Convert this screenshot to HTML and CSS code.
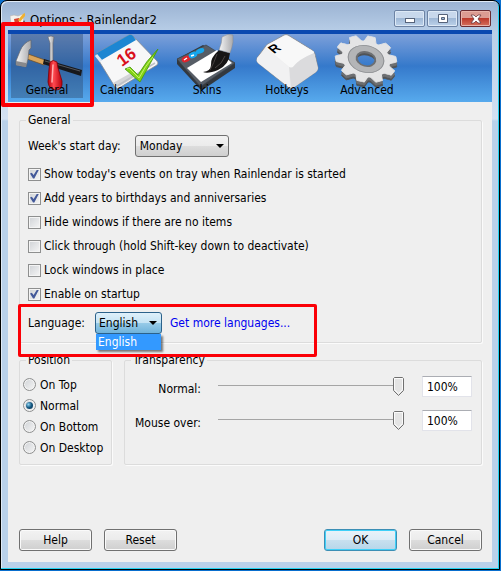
FILE: index.html
```
<!DOCTYPE html>
<html lang="en">

<head>
    <meta charset="UTF-8">
    <meta name="viewport" content="width=device-width, initial-scale=1.0">
    <title>Options : Rainlendar2</title>
    <link rel="stylesheet" href="styles.css">
</head>

<body>
    <div class="window">
        <header class="titlebar">
            <svg class="app-icon" viewBox="0 0 16 14" aria-hidden="true">
                <path d="M0 3l4-1 4 1 5-2 1 9-6 3-4-2-3 1z" fill="#f4f2ee" stroke="#b9b4ae" stroke-width=".6" />
                <path d="M4 6l5-1v5l-4 1z" fill="#d9452f" />
                <path d="M8 7l5-6 2-1v3l-5 6z" fill="#f0b132" />
                <path d="M14 7l1 2-1 3-2-1z" fill="#555" />
            </svg>
            <h1>Options : Rainlendar2</h1>
            <div class="window-buttons">
                <button class="window-button" aria-label="Minimize">
                    <svg viewBox="0 0 12 10"><rect x="1.5" y="4.5" width="9" height="4" fill="#fff" stroke="#56637a" /></svg>
                </button>
                <button class="window-button" aria-label="Maximize">
                    <svg viewBox="0 0 12 10"><path d="M1.5.5h9v8h-9zM4.500 3.500v2h3v-2z" fill="#fff" fill-rule="evenodd" stroke="#56637a" /></svg>
                </button>
                <button class="window-button close" aria-label="Close">
                    <svg viewBox="0 0 12 10"><path d="M1 1h3l2 2 2-2h3L8 5l3 4H8L6 7 4 9H1l3-4z" fill="#fff" stroke="#6b3a40" stroke-width=".8" /></svg>
                </button>
            </div>
        </header>

        <main class="client">
            <nav class="toolbar">
                <button class="tool selected">
                    <svg viewBox="0 0 72 58" aria-hidden="true">
                        <defs>
                            <linearGradient id="steel" x1="0" x2="1">
                                <stop offset="0" stop-color="#f6f6f6" />
                                <stop offset="1" stop-color="#a9a9ac" />
                            </linearGradient>
                            <linearGradient id="red" x1="0" x2="1">
                                <stop offset="0" stop-color="#b5000c" />
                                <stop offset=".4" stop-color="#ff4a50" />
                                <stop offset="1" stop-color="#b8000c" />
                            </linearGradient>
                        </defs>
                        <path d="M17 20l17 6-1 5-17-6z" fill="#d9a55c" stroke="#6d4a20" stroke-width=".7" />
                        <path d="M33 25l38 11-1 6-38-12z" fill="#17181b" />
                        <path d="M34 27l35 10" stroke="#55585e" />
                        <path d="M20 6q-8 3-11 11l-4 10v4l10 2 2-8 1-9 2-2z" fill="url(#steel)" stroke="#66676b" stroke-width=".7" />
                        <path d="M5 27l10 2v4L5 31z" fill="#88898d" />
                        <path d="M37 3q3-2 6 0l-1 6v20h-3V9z" fill="url(#steel)" stroke="#66676b" stroke-width=".6" />
                        <path d="M39 28q3-3 7 0l1 6 4 13q1 9-6 9t-8-8l1-13z" fill="url(#red)" stroke="#7d0008" stroke-width=".8" />
                        <path d="M42 31l-1 17" stroke="#ffb0b0" stroke-width="1.500" stroke-linecap="round" />
                    </svg>
                    <span>General</span>
                </button>
                <button class="tool">
                    <svg viewBox="0 0 72 58" aria-hidden="true">
                        <path d="M5 22q-1-2 1-3L38 1q2-1 4 1l24 25q2 2 0 4L28 54q-2 1-4-1z" fill="#f7f7f8" stroke="#85898f" stroke-width=".8" />
                        <path d="M5 22q-1-2 1-3L38 1q2-1 4 1l3 4L9 27z" fill="#1d86d2" />
                        <path d="M5 21l5 6" stroke="#dbe7f4" stroke-width="3" />
                        <path d="M22 49l16-9 9 1-18 11q-2 1-4 0z" fill="#d4d5d8" />
                        <path d="M26 52L64 29" stroke="#bfc1c6" stroke-width="1.500" />
                        <text class="date" transform="translate(31 33) rotate(-36)">16</text>
                        <path d="M34 35l5-2 8 8q8-14 20-26-9 17-18 33z" fill="#83d216" stroke="#43970c" stroke-width=".8" />
                        <path d="M36 35l2-1 10 10q6-12 14-21" fill="none" stroke="#c5f36b" />
                    </svg>
                    <span>Calendars</span>
                </button>
                <button class="tool">
                    <svg viewBox="0 0 72 58" aria-hidden="true">
                        <path d="M6 30l0-5 26-14 32 18v5L33 55q-2 1-4 0z" fill="#33383e" />
                        <path d="M6 25l29-14 29 18-32 22q-2 1-4 0z" fill="#565d66" stroke="#3b4148" stroke-width=".7" />
                        <path d="M16 34l30-18 15 13-31 19z" fill="#fff" />
                        <ellipse cx="15" cy="25" rx="4.500" ry="3" fill="#df242d" transform="rotate(-24 15 25)" />
                        <ellipse cx="22" cy="21" rx="4.500" ry="3" fill="#16a6ec" transform="rotate(-24 22 21)" />
                        <ellipse cx="29" cy="17" rx="4.500" ry="2.500" fill="#16a6ec" transform="rotate(-24 29 17)" />
                        <path d="M13 26l3-2M20 22l3-1" stroke="#fff" stroke-width="1.500" />
                        <path d="M48 16l11 3q-1 12-12 17-10 4-15 2 8-1 8-7-1-7 8-15z" fill="#171515" />
                        <path d="M46 20q-3 9-7 16M54 22q-3 8-10 12" stroke="#494342" fill="none" />
                        <path d="M51 3q6-4 11-2v7q-1 6-3 11l-11-3q3-7 3-13z" fill="url(#steel)" stroke="#87898d" stroke-width=".5" />
                    </svg>
                    <span>Skins</span>
                </button>
                <button class="tool">
                    <svg viewBox="0 0 72 58" aria-hidden="true">
                        <path d="M33 1q2-1 4 0l24 15q2 1 3 4l3 14q0 2-2 4L42 54q-2 1-4 0L7 29q-2-2-1-5l8-11q1-2 3-3z" fill="#ececed" stroke="#85888c" stroke-width=".8" />
                        <path d="M16 11L33 2q2-1 4 0l25 15q2 1 0 3-14 5-20 13-2 1-4 0L15 14z" fill="#f8f8f8" />
                        <path d="M38 33q2 1 4 0 6-8 21-14l4 15q0 2-2 4L42 54h-2z" fill="#dbdbdd" />
                        <path d="M15 14l23 19 1 21L7 29q-2-2-1-5z" fill="#f1f1f2" />
                        <text class="keycap" transform="translate(23 20) rotate(-32) skewX(18)">R</text>
                    </svg>
                    <span>Hotkeys</span>
                </button>
                <button class="tool">
                    <svg viewBox="0 0 72 58" aria-hidden="true">
                        <defs>
                            <path id="tooth" d="M-7-20l3-10q0-1 1-1h6q1 0 1 1l3 10z" />
                            <g id="teeth">
                                <use href="#tooth" />
                                <use href="#tooth" transform="rotate(36)" />
                                <use href="#tooth" transform="rotate(72)" />
                                <use href="#tooth" transform="rotate(108)" />
                                <use href="#tooth" transform="rotate(144)" />
                                <use href="#tooth" transform="rotate(180)" />
                                <use href="#tooth" transform="rotate(216)" />
                                <use href="#tooth" transform="rotate(252)" />
                                <use href="#tooth" transform="rotate(288)" />
                                <use href="#tooth" transform="rotate(324)" />
                                <circle r="18" fill="none" stroke-width="13" />
                            </g>
                        </defs>
                        <g transform="translate(35 30) rotate(14) scale(1 .74)" fill="#505356" stroke="#505356"><use href="#teeth" /></g>
                        <g transform="translate(35 28) rotate(14) scale(1 .74)" fill="#6d6f72" stroke="#6d6f72"><use href="#teeth" /></g>
                        <g transform="translate(35 25) rotate(14) scale(1 .74)" fill="#e4e4e5" stroke="#e4e4e5">
                            <use href="#teeth" />
                            <circle r="14" fill="none" stroke="#b4b5b7" stroke-width="9" />
                            <circle r="18" fill="none" stroke="#8e9093" />
                            <circle r="9.500" fill="none" stroke="#6d6f72" stroke-width="2" />
                        </g>
                    </svg>
                    <span>Advanced</span>
                </button>
            </nav>

            <form class="options">
                <fieldset class="general">
                    <legend>General</legend>
                    <div class="field week">
                        <label for="week-start">Week's start day:</label>
                        <select id="week-start">
                            <option>Monday</option>
                            <option>Sunday</option>
                        </select>
                    </div>
                    <label class="check"><input type="checkbox" checked>Show today's events on tray when Rainlendar is started</label>
                    <label class="check"><input type="checkbox" checked>Add years to birthdays and anniversaries</label>
                    <label class="check"><input type="checkbox">Hide windows if there are no items</label>
                    <label class="check"><input type="checkbox">Click through (hold Shift-key down to deactivate)</label>
                    <label class="check"><input type="checkbox">Lock windows in place</label>
                    <label class="check"><input type="checkbox" checked>Enable on startup</label>
                    <div class="field language">
                        <label for="language">Language:</label>
                        <div class="dropdown">
                            <select id="language" class="open">
                                <option>English</option>
                            </select>
                            <div class="dropdown-list">English</div>
                        </div>
                        <a href="#">Get more languages...</a>
                    </div>
                </fieldset>

                <div class="groups">
                    <fieldset class="position">
                        <legend>Position</legend>
                        <label class="radio"><input type="radio" name="position">On Top</label>
                        <label class="radio"><input type="radio" name="position" checked>Normal</label>
                        <label class="radio"><input type="radio" name="position">On Bottom</label>
                        <label class="radio"><input type="radio" name="position">On Desktop</label>
                    </fieldset>
                    <fieldset class="transparency">
                        <legend>Transparency</legend>
                        <div class="slider-row">
                            <label for="normal">Normal:</label>
                            <input type="range" id="normal" min="0" max="100" value="100">
                            <input type="text" class="percent" value="100%" aria-label="Normal value">
                        </div>
                        <div class="slider-row">
                            <label for="mouse-over">Mouse over:</label>
                            <input type="range" id="mouse-over" min="0" max="100" value="100">
                            <input type="text" class="percent" value="100%" aria-label="Mouse over value">
                        </div>
                    </fieldset>
                </div>

                <footer class="actions">
                    <button type="button">Help</button>
                    <button type="button">Reset</button>
                    <button type="submit" class="default">OK</button>
                    <button type="button">Cancel</button>
                </footer>
            </form>
        </main>

        <div class="highlight highlight-tool"></div>
        <div class="highlight highlight-language"></div>
    </div>
</body>

</html>
```

FILE: styles.css
```
* {
    box-sizing: border-box;
}

body {
    display: flex;
    min-height: 100vh;
    margin: 0;
    padding: 0 1px 1px 0;
    background: #0a6fce;
    color: #000;
    font-family: Tahoma, "DejaVu Sans Condensed", "DejaVu Sans", sans-serif;
    font-size: 12px;
    line-height: 16px;
}

button,
input,
select {
    font: inherit;
    color: inherit;
}

h1 {
    flex: 1;
    margin: 0;
    font-size: 13px;
    font-weight: normal;
}

.window {
    position: relative;
    display: flex;
    flex: 1;
    flex-direction: column;
    padding: 0 7px 7px 6px;
    border: 1px solid #000;
    border-radius: 7px 7px 0 0;
    background: linear-gradient(#9ab2d2, #b9cfe8 32px, #d3e1f2 118px, #b9d1ea 120px);
    box-shadow: inset -1px -1px #22d3f2, inset 1px 1px #dfeaf6;
}

/* Title bar */

.titlebar {
    display: flex;
    align-items: center;
    gap: 4px;
    height: 29px;
    padding: 8px 1px 0 3px;
}

.app-icon {
    width: 16px;
    height: 14px;
}

.window-buttons {
    display: flex;
    align-self: flex-start;
    gap: 2px;
    padding-top: 1px;
}

.window-button {
    display: flex;
    align-items: center;
    justify-content: center;
    width: 31px;
    height: 17px;
    padding: 0;
    border: 1px solid #6d83a4;
    border-radius: 2px;
    background: linear-gradient(#c8d8ec 50%, #9fb8d6 50%, #bcd2ea);
    box-shadow: inset 0 0 0 1px #dde9f6;
}

.window-button svg {
    width: 12px;
    height: 10px;
}

.window-button.close {
    border-color: #6a2c31;
    background: linear-gradient(#dc9c92 50%, #bd3b2c 50%, #d5705c);
    box-shadow: inset 0 0 0 1px #e8b3a9;
}

/* Toolbar */

.client {
    display: flex;
    flex: 1;
    flex-direction: column;
    margin-left: 1px;
    background: #efefef;
}

.toolbar {
    display: flex;
    gap: 8px;
    padding: 4px 3px;
    background: linear-gradient(#0a48b0 4px, #7da0da 4px, #3579cb 36px, #57aaed);
}

.tool {
    display: flex;
    flex-direction: column;
    width: 72px;
    padding: 0;
    border: 0;
    background: none;
    text-align: center;
}

.tool svg {
    width: 72px;
    height: 58px;
    margin-bottom: -9px;
}

.tool span {
    line-height: 15px;
}

.tool.selected {
    background: rgba(45, 70, 105, 0.4);
}

.date {
    fill: #d90f1b;
    font-family: "Liberation Sans", Arial, sans-serif;
    font-size: 17px;
    font-weight: bold;
}

.keycap {
    font-family: "Liberation Sans", Arial, sans-serif;
    font-size: 13px;
    font-weight: bold;
}

/* Option groups */

.options {
    display: flex;
    flex: 1;
    flex-direction: column;
    padding: 10px 10px 11px 11px;
}

fieldset {
    display: flex;
    flex-direction: column;
    min-width: 0;
    margin: 0;
    padding: 0 8px;
    border: 1px solid #dcdcdc;
    border-radius: 2px;
    box-shadow: 1px 1px #fbfbfb;
}

legend {
    margin-left: -2px;
    padding: 0 2px;
}

.field {
    display: flex;
    align-items: center;
}

.week {
    gap: 14px;
    padding: 7px 0 5px;
}

.language {
    gap: 8px;
    padding: 6px 0 8px;
}

.language label {
    width: 59px;
}

.check,
.radio {
    display: flex;
    align-items: center;
    gap: 3px;
    height: 24px;
}

.check input,
.radio input {
    display: grid;
    place-content: center;
    appearance: none;
    width: 13px;
    height: 13px;
    margin: 0;
    border: 1px solid #8e8f8f;
    background: linear-gradient(135deg, #cfd2d6, #f6f6f6);
    box-shadow: inset 0 0 0 1px #f4f4f4;
}

.check input:checked::after {
    content: "";
    width: 9px;
    height: 9px;
    background: #43599a;
    clip-path: polygon(0 45%, 20% 35%, 40% 62%, 78% 0, 100% 0, 48% 100%, 34% 100%);
}

.radio {
    gap: 4px;
    height: 21px;
}

.radio input {
    border-radius: 50%;
}

.radio input:checked::after {
    content: "";
    width: 7px;
    height: 7px;
    border-radius: 50%;
    background: radial-gradient(circle at 35% 35%, #8fd4f2, #14567f 50%, #0b2f4d);
}

select {
    appearance: none;
    display: block;
    width: 94px;
    height: 22px;
    padding: 0 16px 0 4px;
    border: 1px solid #707070;
    border-radius: 3px;
    background:
        url("data:image/svg+xml,%3Csvg xmlns='http://www.w3.org/2000/svg' width='8' height='4'%3E%3Cpath d='M0 0h8L4 4z'/%3E%3C/svg%3E") no-repeat right 4px center,
        linear-gradient(#f2f2f2, #ebebeb 50%, #dddddd 50%, #cfcfcf);
}

select.open {
    width: 67px;
    padding-left: 3px;
    border-color: #2c628b;
    background:
        url("data:image/svg+xml,%3Csvg xmlns='http://www.w3.org/2000/svg' width='8' height='4'%3E%3Cpath d='M0 0h8L4 4z'/%3E%3C/svg%3E") no-repeat right 4px center,
        linear-gradient(#dff0fa, #c4e3f4 50%, #98cbe8 50%, #6fb2da);
}

.dropdown {
    position: relative;
}

.dropdown-list {
    position: absolute;
    top: 100%;
    left: 1px;
    z-index: 1;
    width: 65px;
    padding-left: 2px;
    background: #3399ff;
    box-shadow: 2px 2px 2px rgba(0, 0, 0, 0.5);
    color: #fff;
}

a {
    color: #0000f0;
    text-decoration: none;
}

.groups {
    display: flex;
    gap: 12px;
    margin-top: 9px;
}

.position {
    flex: 0 0 93px;
    padding: 6px 3px;
}

.position legend {
    margin-left: 3px;
}

.transparency {
    flex: 1;
    gap: 13px;
    padding: 8px 9px 0 8px;
}

.slider-row {
    display: flex;
    align-items: center;
}

.slider-row label {
    flex: 0 0 68px;
    padding-top: 4px;
    text-align: right;
    white-space: nowrap;
}

.slider-row input[type="range"] {
    appearance: none;
    flex: 1;
    min-width: 0;
    height: 20px;
    margin: 0 18px 0 17px;
    background: linear-gradient(#a5a5a5, #a5a5a5) no-repeat 0 8px / 100% 1px;
}

.slider-row input[type="range"]::-webkit-slider-thumb {
    appearance: none;
    width: 11px;
    height: 19px;
    background: url("data:image/svg+xml,%3Csvg xmlns='http://www.w3.org/2000/svg' width='11' height='19'%3E%3Cpath d='M1.5.5h8l1 1v12l-5 5-5-5v-12z' fill='%23e4e4e4' stroke='%23707070'/%3E%3Cpath d='M1.500 1.500h8v11l-4 4-4-4z' fill='none' stroke='%23fafafa'/%3E%3C/svg%3E");
}

.percent {
    width: 50px;
    height: 21px;
    padding: 0 4px;
    border: 1px solid #e2e3ea;
    border-top-color: #abadb3;
    background: #fff;
}

/* Buttons */

.actions {
    display: flex;
    gap: 12px;
    margin-top: auto;
}

.actions button {
    width: 73px;
    height: 22px;
    padding: 0;
    border: 1px solid #707070;
    border-radius: 3px;
    background: linear-gradient(#f2f2f2, #ebebeb 50%, #dddddd 50%, #cfcfcf);
    box-shadow: inset 0 0 0 1px #fafafa;
}

.actions .default {
    margin-left: auto;
    border-color: #3c8fb5;
    background: linear-gradient(#e9f3f9, #dcecf6 50%, #c8e0ef 50%, #b5d6ea);
    box-shadow: inset 0 0 0 1px #3fd0f8;
}

/* Red marker frames over the dialog */

.highlight {
    position: absolute;
    border: 4px solid #fb0007;
    border-radius: 2px;
    pointer-events: none;
}

.highlight-tool {
    top: 21px;
    left: 0;
    width: 93px;
    height: 85px;
}

.highlight-language {
    top: 303px;
    left: 17px;
    width: 299px;
    height: 53px;
    border-width: 3px;
}
```
